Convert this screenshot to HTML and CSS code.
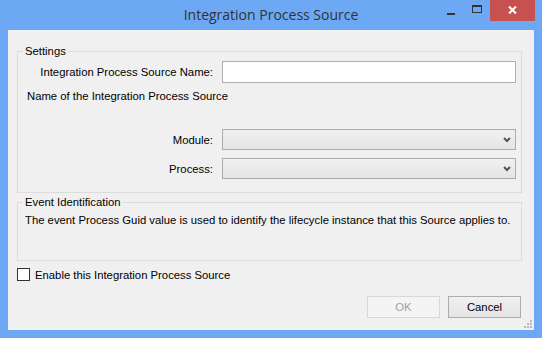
FILE: index.html
```html
<!DOCTYPE html>
<html lang="en">
<head>
  <meta charset="UTF-8" />
  <meta name="viewport" content="width=device-width, initial-scale=1.0" />
  <title>Integration Process Source</title>
  <link rel="stylesheet" href="styles.css">
</head>
<body>

  <div class="window">
    <div class="titlebar">
      <div class="spacer"></div>
      <div class="title">Integration Process Source</div>
      <div class="caption-buttons">
        <span class="cap-btn">
          <svg width="8" height="2" viewBox="0 0 8 2"><rect width="8" height="2" fill="#333"/></svg>
        </span>
        <span class="cap-btn">
          <svg width="10" height="8" viewBox="0 0 10 8"><path d="M0 0H10V8H0Z M1 2V7H9V2Z" fill="#333" fill-rule="evenodd"/></svg>
        </span>
        <span class="cap-btn close">
          <svg width="9" height="8" viewBox="0 0 9 8"><path d="M1 0.5L8 7.5M8 0.5L1 7.5" stroke="#fff" stroke-width="2"/></svg>
        </span>
      </div>
    </div>

    <div class="client">
      <fieldset class="group settings">
        <legend>Settings</legend>
        <div class="row">
          <label class="field-label">Integration Process Source Name:</label>
          <input type="text" class="textbox">
        </div>
        <div class="hint">Name of the Integration Process Source</div>
        <div class="row module-row">
          <label class="field-label">Module:</label>
          <div class="combo">
            <svg width="8" height="6" viewBox="0 0 8 6"><path d="M1 1L4 4L7 1" stroke="#555" stroke-width="2" fill="none"/></svg>
          </div>
        </div>
        <div class="row process-row">
          <label class="field-label">Process:</label>
          <div class="combo">
            <svg width="8" height="6" viewBox="0 0 8 6"><path d="M1 1L4 4L7 1" stroke="#555" stroke-width="2" fill="none"/></svg>
          </div>
        </div>
      </fieldset>

      <fieldset class="group events">
        <legend>Event Identification</legend>
        <div class="event-text">The event Process Guid value is used to identify the lifecycle instance that this Source applies to.</div>
      </fieldset>

      <div class="check-row">
        <span class="checkbox"></span>
        <span>Enable this Integration Process Source</span>
      </div>

      <div class="buttons">
        <button class="btn" disabled>OK</button>
        <button class="btn">Cancel</button>
      </div>

      <svg class="grip" width="8" height="8" viewBox="0 0 8 8">
        <rect x="6" y="0" width="2" height="2" fill="#bcbcbc"/>
        <rect x="3" y="3" width="2" height="2" fill="#bcbcbc"/>
        <rect x="6" y="3" width="2" height="2" fill="#bcbcbc"/>
        <rect x="0" y="6" width="2" height="2" fill="#bcbcbc"/>
        <rect x="3" y="6" width="2" height="2" fill="#bcbcbc"/>
        <rect x="6" y="6" width="2" height="2" fill="#bcbcbc"/>
      </svg>
    </div>
  </div>

</body>
</html>
```

FILE: styles.css
```css
body {
  margin: 0;
  background: #6ca8f4;
  font-family: 'Liberation Sans', Arial, sans-serif;
  font-size: 11.3px;
  color: #000;
}

.window {
  width: 542px;
  height: 338px;
  display: flex;
  flex-direction: column;
  background: #6ca8f4;
}

.titlebar {
  height: 30px;
  display: grid;
  grid-template-columns: 1fr auto 1fr;
}

.title {
  font-family: 'Open Sans', 'Noto Sans', sans-serif;
  font-size: 14px;
  color: #333;
  line-height: 30px;
}

.caption-buttons {
  display: flex;
  justify-content: flex-end;
  align-items: flex-start;
  margin-right: 7px;
}

.cap-btn {
  width: 26px;
  height: 21px;
  display: flex;
  justify-content: center;
  align-items: center;
}

.cap-btn:first-child svg {
  margin-top: 7px;
}

.cap-btn:nth-child(2) svg {
  margin-top: -3px;
}

.cap-btn.close {
  width: 45px;
  background: #c75050;
}

.cap-btn.close svg {
  margin-top: -2px;
}

.client {
  position: relative;
  flex: 1;
  margin: 0 8px 8px 8px;
  background: #f0f0f0;
  display: flex;
  flex-direction: column;
}

.group {
  margin: 0 12px 0 9px;
  padding: 0;
  border: 1px solid #dcdcdc;
  min-width: 0;
}

.group legend {
  margin-left: 5px;
  padding: 0 2px;
  line-height: 13px;
}

.settings {
  margin-top: 15px;
  padding-bottom: 13px;
}

.row {
  display: flex;
  align-items: center;
  padding-right: 5px;
}

.settings .row:first-of-type {
  margin-top: 3px;
}

.field-label {
  width: 195px;
  margin-right: 9px;
  text-align: right;
}

.textbox {
  flex: 1;
  height: 22px;
  box-sizing: border-box;
  margin: 0;
  border: 1px solid #abadb3;
  background: #fff;
  outline: none;
}

.hint {
  margin: 7px 0 0 9px;
  line-height: 13px;
}

.module-row {
  margin-top: 26px;
}

.process-row {
  margin-top: 8px;
}

.combo {
  flex: 1;
  height: 21px;
  box-sizing: border-box;
  border: 1px solid #acacac;
  background: linear-gradient(#f0f0f0, #e5e5e5);
  display: flex;
  justify-content: flex-end;
  align-items: center;
  padding-right: 4px;
}

.events {
  margin-top: 3px;
  padding-bottom: 33px;
}

.event-text {
  margin: 5px 0 0 7px;
  line-height: 13px;
  white-space: nowrap;
}

.check-row {
  display: flex;
  align-items: center;
  gap: 5px;
  margin: 7px 0 0 9px;
}

.checkbox {
  width: 13px;
  height: 13px;
  box-sizing: border-box;
  border: 1px solid #333;
  background: #fff;
}

.buttons {
  display: flex;
  justify-content: flex-end;
  gap: 8px;
  margin: 15px 13px 0 0;
}

.btn {
  width: 73px;
  height: 22px;
  box-sizing: border-box;
  border: 1px solid #acacac;
  background: linear-gradient(#f0f0f0, #e5e5e5);
  font-family: inherit;
  font-size: inherit;
  color: #000;
  padding: 0;
}

.btn:disabled {
  border-color: #d9d9d9;
  background: #f4f4f4;
  color: #a0a0a0;
}

.grip {
  position: absolute;
  right: 2px;
  bottom: 2px;
}
```
